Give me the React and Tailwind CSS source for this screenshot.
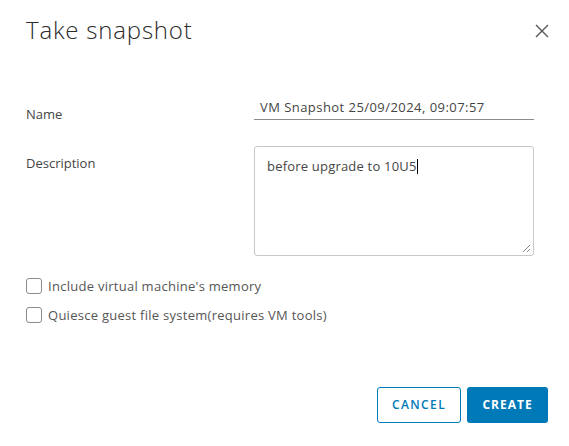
export default function App() {
  return (
    <div className="w-[569px] h-[446px] bg-white text-[#333] font-['Open_Sans',sans-serif] flex flex-col">
      {/* Header */}
      <div className="flex items-start justify-between pl-[26px] pr-[20px] pt-[14px]">
        <h1 className="text-[24px] font-light leading-[32px] tracking-[0.8px] text-[#2b2b2b]">Take snapshot</h1>
        <button className="mt-[10px] w-[14px] h-[14px] text-[#565656]">
          <svg viewBox="0 0 14 14" width="14" height="14" fill="none" stroke="currentColor" strokeWidth="1.4">
            <path d="M1 1 L13 13 M13 1 L1 13" />
          </svg>
        </button>
      </div>

      {/* Form */}
      <div className="pl-[26px] pr-[35px] mt-[52px] flex flex-col">
        <div className="flex items-end">
          <label className="w-[228px] text-[13px] text-[#454545] leading-[18px] mb-[-3px]">Name</label>
          <div className="flex-1 border-b border-[#8c8c8c] pl-[6px] pb-[3px] text-[13px] tracking-[0.45px] text-[#454545] leading-[18px]">
            VM Snapshot 25/09/2024, 09:07:57
          </div>
        </div>

        <div className="flex items-start mt-[26px]">
          <label className="w-[228px] text-[13px] text-[#454545] leading-[18px] mt-[8px]">Description</label>
          <div className="flex-1 h-[110px] border border-[#c8c8c8] rounded-[3px] relative pl-[12px] pt-[10px] text-[13px] tracking-[0.2px] text-[#454545] leading-[18px]">
            <span>before upgrade to 10U5</span>
            <span className="inline-block w-[1px] h-[15px] bg-black align-middle -mt-[2px]"></span>
            <svg className="absolute right-[2px] bottom-[2px]" width="9" height="9" viewBox="0 0 9 9" stroke="#888" strokeWidth="1">
              <path d="M8 1 L1 8 M8 5 L5 8" />
            </svg>
          </div>
        </div>

        <div className="flex flex-col gap-[13px] mt-[22px]">
          <div className="flex items-center gap-[6px]">
            <span className="w-[16px] h-[16px] border border-[#8c8c8c] rounded-[3px]"></span>
            <span className="text-[13px] tracking-[0.27px] text-[#565656] leading-[16px]">Include virtual machine's memory</span>
          </div>
          <div className="flex items-center gap-[6px]">
            <span className="w-[16px] h-[16px] border border-[#8c8c8c] rounded-[3px]"></span>
            <span className="text-[13px] tracking-[0.27px] text-[#565656] leading-[16px]">Quiesce guest file system(requires VM tools)</span>
          </div>
        </div>
      </div>

      {/* Footer */}
      <div className="flex justify-end gap-[6px] pr-[21px] mt-[64px]">
        <button className="w-[84px] h-[36px] border border-[#0079b8] rounded-[3px] text-[#0079b8] text-[12px] font-semibold tracking-[1.4px]">
          CANCEL
        </button>
        <button className="w-[81px] h-[36px] bg-[#0079b8] rounded-[3px] text-white text-[12px] font-bold tracking-[1px]">
          CREATE
        </button>
      </div>
    </div>
  );
}
